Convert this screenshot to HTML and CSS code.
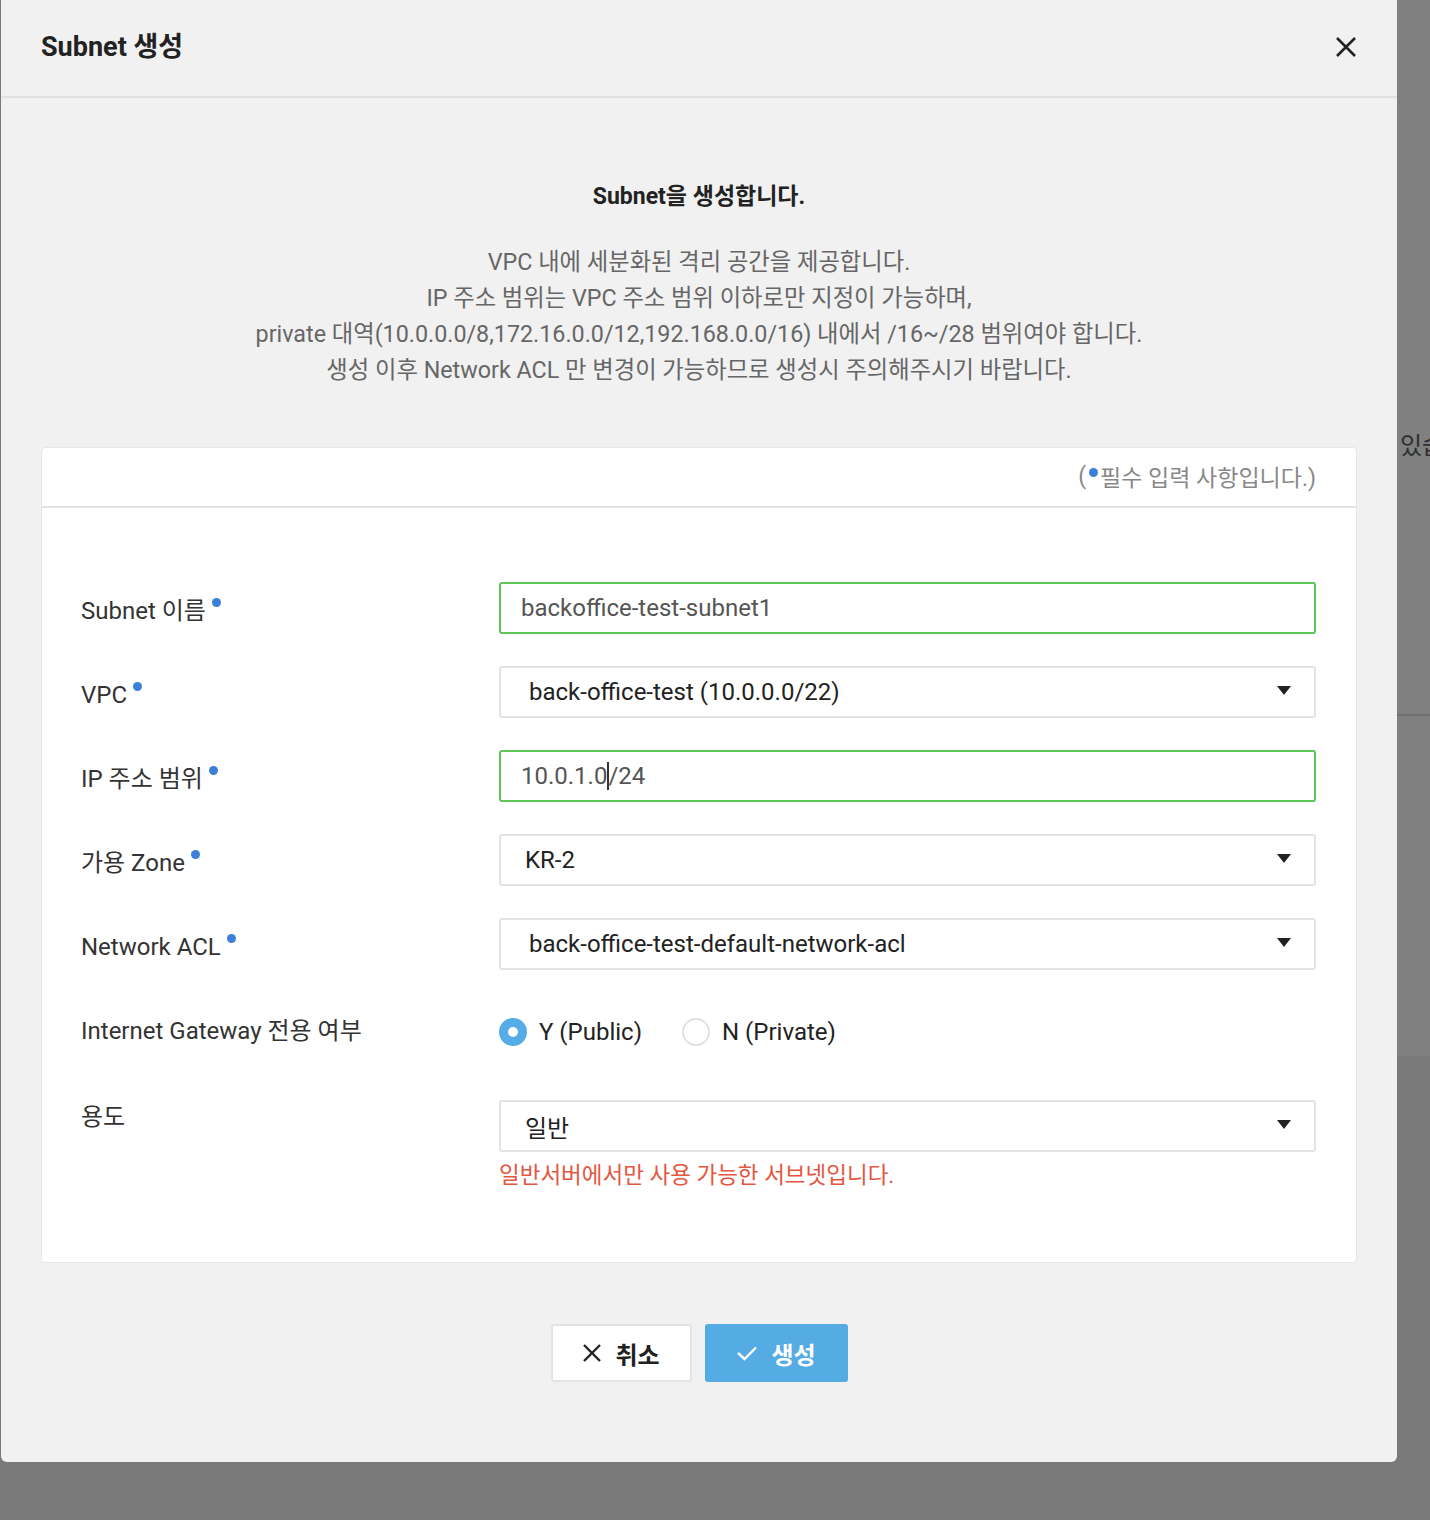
FILE: index.html
```html
<!DOCTYPE html>
<html lang="ko">
<head>
    <meta charset="UTF-8">
    <meta name="viewport" content="width=device-width, initial-scale=1.0">
    <title>Subnet 생성</title>
    <link rel="stylesheet" href="styles.css">
</head>
<body>
    <div class="screen">
        <div class="modal">
            <div class="modal-header">
                <h1>Subnet 생성</h1>
                <button class="close-btn" aria-label="닫기">
                    <svg width="22" height="22" viewBox="0 0 22 22"><path d="M2 2 L20 20 M20 2 L2 20" stroke="#222" stroke-width="2.6" fill="none"/></svg>
                </button>
            </div>
            <div class="modal-body">
                <p class="intro">Subnet을 생성합니다.</p>
                <div class="desc">
                    <p>VPC 내에 세분화된 격리 공간을 제공합니다.</p>
                    <p>IP 주소 범위는 VPC 주소 범위 이하로만 지정이 가능하며,</p>
                    <p>private 대역(10.0.0.0/8,172.16.0.0/12,192.168.0.0/16) 내에서 /16~/28 범위여야 합니다.</p>
                    <p>생성 이후 Network ACL 만 변경이 가능하므로 생성시 주의해주시기 바랍니다.</p>
                </div>

                <div class="card">
                    <div class="card-header">(<span class="dot"></span>필수 입력 사항입니다.)</div>
                    <div class="card-body">
                        <div class="form-row">
                            <div class="label">Subnet 이름<span class="dot req"></span></div>
                            <div class="field">
                                <div class="input valid">backoffice-test-subnet1</div>
                            </div>
                        </div>
                        <div class="form-row">
                            <div class="label">VPC<span class="dot req"></span></div>
                            <div class="field">
                                <div class="select wide">back-office-test (10.0.0.0/22)<span class="caret"></span></div>
                            </div>
                        </div>
                        <div class="form-row">
                            <div class="label">IP 주소 범위<span class="dot req"></span></div>
                            <div class="field">
                                <div class="input valid">10.0.1.0<span class="cursor"></span>/24</div>
                            </div>
                        </div>
                        <div class="form-row">
                            <div class="label">가용 Zone<span class="dot req"></span></div>
                            <div class="field">
                                <div class="select">KR-2<span class="caret"></span></div>
                            </div>
                        </div>
                        <div class="form-row">
                            <div class="label">Network ACL<span class="dot req"></span></div>
                            <div class="field">
                                <div class="select wide">back-office-test-default-network-acl<span class="caret"></span></div>
                            </div>
                        </div>
                        <div class="form-row radio-row">
                            <div class="label">Internet Gateway 전용 여부</div>
                            <div class="field radios">
                                <label class="radio"><span class="radio-mark checked"></span>Y (Public)</label>
                                <label class="radio"><span class="radio-mark"></span>N (Private)</label>
                            </div>
                        </div>
                        <div class="form-row last">
                            <div class="label top">용도</div>
                            <div class="field">
                                <div class="select">일반<span class="caret"></span></div>
                                <p class="error">일반서버에서만 사용 가능한 서브넷입니다.</p>
                            </div>
                        </div>
                    </div>
                </div>

                <div class="actions">
                    <button class="btn btn-cancel">
                        <svg width="20" height="20" viewBox="0 0 20 20"><path d="M2 2 L18 18 M18 2 L2 18" stroke="#222" stroke-width="2.4" fill="none"/></svg>
                        취소
                    </button>
                    <button class="btn btn-primary">
                        <svg width="22" height="16" viewBox="0 0 22 16"><path d="M2 8 L8.5 14 L20 2.5" stroke="#fff" stroke-width="2.4" fill="none"/></svg>
                        생성
                    </button>
                </div>
            </div>
        </div>
        <div class="backdrop-page">
            <div class="peek-top"><span class="peek-text">있습</span></div>
            <div class="peek-bottom"></div>
        </div>
    </div>
</body>
</html>
```

FILE: styles.css
```css
body {
    margin: 0;
    background-color: #7a7a7a;
    font-family: Roboto, "Noto Sans CJK KR", sans-serif;
    color: #222;
}
p {
    margin: 0;
}
.screen {
    display: flex;
    align-items: flex-start;
    width: 1430px;
    height: 1520px;
    overflow: hidden;
}
.modal {
    width: 1396px;
    margin-left: 1px;
    flex-shrink: 0;
    background-color: #f1f1f1;
    border-radius: 0 0 6px 6px;
}
.modal-header {
    height: 96px;
    padding: 0 40px;
    display: flex;
    align-items: center;
    justify-content: space-between;
    border-bottom: 2px solid #e1e1e1;
}
.modal-header h1 {
    margin: 0;
    font-size: 27px;
    font-weight: 700;
    color: #222;
    padding-bottom: 8px;
}
.close-btn {
    background: none;
    border: none;
    padding: 0 0 2px;
    display: flex;
    cursor: pointer;
}
.modal-body {
    padding: 0 40px 80px;
}
.intro {
    margin-top: 84px;
    text-align: center;
    font-size: 23px;
    font-weight: 700;
    line-height: 30px;
    color: #222;
}
.desc {
    margin-top: 32px;
    text-align: center;
    font-size: 23.3px;
    line-height: 36px;
    color: #666;
}
.card {
    margin-top: 59px;
    background-color: #fff;
    border: 1px solid #e6e6e6;
    border-radius: 4px;
}
.card-header {
    height: 60px;
    padding-right: 40px;
    padding-bottom: 2px;
    box-sizing: border-box;
    display: flex;
    align-items: center;
    justify-content: flex-end;
    font-size: 23px;
    color: #888;
    border-bottom: 2px solid #e3e3e3;
}
.dot {
    display: inline-block;
    width: 9px;
    height: 9px;
    border-radius: 50%;
    background-color: #3b7fd8;
    margin: 0 2px 8px 3px;
}
.dot.req {
    margin: 0 0 12px 6px;
}
.card-body {
    padding: 74px 40px 72px 39px;
}
.form-row {
    display: flex;
    margin-bottom: 32px;
}
.form-row.last {
    margin-bottom: 0;
}
.label {
    box-sizing: border-box;
    width: 418px;
    height: 52px;
    flex-shrink: 0;
    font-size: 24px;
    line-height: 48px;
    padding-top: 5px;
    color: #333;
}
.label.top {
    padding-top: 2px;
    margin-top: -9px;
}
.field {
    flex: 1;
}
.input, .select {
    box-sizing: border-box;
    height: 52px;
    display: flex;
    align-items: center;
    border: 2px solid #e3e3e3;
    border-radius: 3px;
    font-size: 24px;
    background-color: #fff;
}
.input {
    padding-left: 20px;
    color: #555;
}
.input.valid {
    border-color: #5cc55a;
}
.select {
    position: relative;
    padding-left: 24px;
    color: #222;
}
.select.wide {
    padding-left: 28px;
}
.caret {
    position: absolute;
    right: 23px;
    top: 18px;
    width: 0;
    height: 0;
    border-left: 7px solid transparent;
    border-right: 7px solid transparent;
    border-top: 9px solid #222;
}
.cursor {
    display: inline-block;
    width: 2px;
    height: 28px;
    background-color: #333;
    margin: 0 -1px 0 0;
}
.radio-row {
    height: 60px;
    margin-bottom: 38px;
}
.radio-row .label {
    height: 60px;
    line-height: 58px;
    padding-top: 0;
}
.radios {
    display: flex;
    align-items: center;
    gap: 40px;
    height: 60px;
}
.radio {
    display: flex;
    align-items: center;
    gap: 12px;
    font-size: 24px;
    color: #222;
}
.radio-mark {
    box-sizing: border-box;
    width: 28px;
    height: 28px;
    border-radius: 50%;
    border: 2px solid #e2e2e2;
    background-color: #fff;
}
.radio-mark.checked {
    border: 9px solid #55ace6;
    background-color: #fff;
}
.error {
    margin-top: 8px;
    font-size: 22.5px;
    line-height: 30px;
    color: #e5563f;
}
.actions {
    margin-top: 61px;
    display: flex;
    justify-content: center;
    gap: 13px;
}
.btn {
    box-sizing: border-box;
    height: 58px;
    display: flex;
    align-items: center;
    justify-content: center;
    gap: 13px;
    font-family: Roboto, "Noto Sans CJK KR", sans-serif;
    font-size: 24px;
    font-weight: 700;
    border-radius: 3px;
    cursor: pointer;
}
.btn-cancel {
    width: 141px;
    background-color: #fff;
    border: 2px solid #e3e3e3;
    color: #222;
}
.btn-primary {
    width: 143px;
    background-color: #55abe4;
    border: none;
    color: #fff;
}
.backdrop-page {
    flex: 1;
    overflow: hidden;
}
.peek-top {
    box-sizing: border-box;
    height: 716px;
    padding-top: 426px;
    padding-left: 3px;
    background-color: #808080;
    border-bottom: 2px solid #6f6f6f;
    white-space: nowrap;
}
.peek-text {
    font-size: 24px;
    color: #2e2e2e;
}
.peek-bottom {
    height: 340px;
    background-color: #808080;
}
```
